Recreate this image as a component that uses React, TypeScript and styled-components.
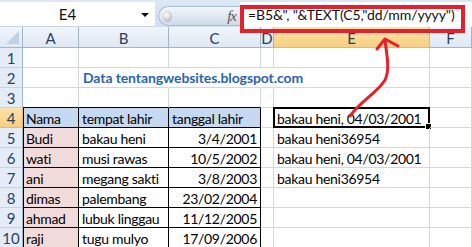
import React from "react";
import styled, { createGlobalStyle, css } from "styled-components";

const Global = createGlobalStyle`
  html, body { margin: 0; padding: 0; background: #fff; overflow: hidden; }
  #root { width: 472px; height: 247px; }
`;

const FONT = `"Lato", "Open Sans", "Liberation Sans", sans-serif`;

const Window = styled.div`
  position: relative;
  width: 472px;
  height: 247px;
  overflow: hidden;
  background: #dbe5f2;
  font-family: ${FONT};
  display: flex;
  flex-direction: column;
`;

const RibbonStrip = styled.div`
  height: 5px;
  display: flex;
  gap: 4px;
  background: #c4d6ec;
  overflow: hidden;
`;

const GroupLabel = styled.div<{ $w: number }>`
  width: ${(p) => p.$w}px;
  flex: none;
  height: 5px;
  position: relative;
  background: linear-gradient(#c7d8ee, #b9cfea);
  border: 1px solid #9fbadd;
  border-top: none;
  border-radius: 0 0 3px 3px;
  box-sizing: border-box;
  overflow: hidden;
  span {
    position: absolute;
    left: 0;
    right: 0;
    bottom: -1px;
    text-align: center;
    font-size: 11px;
    line-height: 11px;
    color: #3b64a5;
  }
`;

const FormulaArea = styled.div`
  height: 29px;
  box-sizing: border-box;
  padding-top: 2px;
  display: flex;
  align-items: flex-start;
  background: linear-gradient(#dce7f5, #d2dff0);
`;

const NameBox = styled.div`
  width: 155px;
  height: 25px;
  flex: none;
  background: #fff;
  display: flex;
  align-items: center;
  position: relative;
  font-size: 15px;
  color: #111;
  box-sizing: border-box;
  border-bottom: 1px solid #c9d6e8;
`;

const NameText = styled.div`
  flex: 1;
  text-align: center;
  padding-right: 20px;
`;

const DropArrow = styled.div`
  position: absolute;
  right: 6px;
  top: 11px;
  width: 0;
  height: 0;
  border-left: 4px solid transparent;
  border-right: 4px solid transparent;
  border-top: 4px solid #111;
`;

const FxPill = styled.div`
  margin-left: 3px;
  margin-top: 4px;
  width: 82px;
  height: 20px;
  flex: none;
  box-sizing: border-box;
  border: 1px solid #a7bdd8;
  border-right: none;
  border-radius: 10px 0 0 10px;
  background: linear-gradient(#f4f7fb, #dfe7f2 55%, #cfdbea);
  display: flex;
  align-items: center;
  justify-content: space-between;
  padding: 0 4px 0 4px;
`;

const Knob = styled.div`
  width: 9px;
  height: 11px;
  border-radius: 50%;
  background: radial-gradient(circle at 40% 35%, #ffffff, #c4c9d0 60%, #a9b0ba);
`;

const Fx = styled.span`
  font-family: "Liberation Serif", serif;
  font-style: italic;
  font-size: 15px;
  color: #555;
  letter-spacing: -1px;
`;

const FormulaInput = styled.div`
  flex: 1;
  height: 25px;
  background: #fff;
  display: flex;
  align-items: center;
  padding-left: 8px;
  font-size: 14px;
  letter-spacing: -0.1px;
  color: #111;
  white-space: nowrap;
`;

const Grid = styled.div`
  display: grid;
  grid-template-columns: 23px 56px 90px 92px 13px 156px 42px;
  grid-auto-rows: 20px;
  grid-template-rows: 21px;
  background: #fff;
  font-size: 14px;
  letter-spacing: -0.3px;
`;

const Head = styled.div<{ $sel?: boolean; $row?: boolean }>`
  box-sizing: border-box;
  border-right: 1px solid #9eb6ce;
  border-bottom: 1px solid #9eb6ce;
  background: linear-gradient(#f1f5fb, #dfe8f4);
  color: #27415f;
  display: flex;
  align-items: center;
  justify-content: center;
  font-size: 15px;
  letter-spacing: 0;
  padding-top: 1px;
  ${(p) =>
    p.$row &&
    css`
      background: #e4ecf7;
      border-bottom-color: #c5d3e6;
    `}
  ${(p) =>
    p.$sel &&
    css`
      background: linear-gradient(#fbe3ad, #f7cf7e);
      border-right-color: #f0b55a;
      border-bottom-color: #f0b55a;
    `}
`;

const Corner = styled(Head)`
  position: relative;
  &::after {
    content: "";
    position: absolute;
    right: 3px;
    bottom: 3px;
    width: 0;
    height: 0;
    border-left: 13px solid transparent;
    border-bottom: 13px solid #c0d1e6;
  }
`;

type CellProps = {
  $fill?: string;
  $right?: boolean;
  $table?: boolean;
  $left?: boolean;
  $topEdge?: boolean;
  $noRight?: boolean;
  $sel?: boolean;
};

const Cell = styled.div<CellProps>`
  box-sizing: border-box;
  position: relative;
  border-right: 1px solid ${(p) => (p.$table ? "#000" : p.$noRight ? "transparent" : "#d0d7e5")};
  border-bottom: 1px solid ${(p) => (p.$table || p.$topEdge ? "#000" : "#d0d7e5")};
  background: ${(p) => p.$fill || "transparent"};
  display: block;
  text-align: ${(p) => (p.$right ? "right" : "left")};
  padding: 2px 3px 0 3px;
  white-space: nowrap;
  color: #000;
  line-height: 17px;
  ${(p) => p.$left && css`box-shadow: inset 1px 0 0 #000;`}
  ${(p) =>
    p.$sel &&
    css`
      &::before {
        content: "";
        position: absolute;
        left: -1px;
        top: -1px;
        right: -1px;
        bottom: -1px;
        border: 2px solid #000;
      }
      &::after {
        content: "";
        position: absolute;
        right: -3px;
        bottom: -3px;
        width: 5px;
        height: 5px;
        background: #000;
        border: 1px solid #fff;
      }
    `}
`;

/* Title text spills over the neighbouring empty cells, as in Excel */
const SpillText = styled.span`
  position: absolute;
  left: 4px;
  bottom: 1px;
  z-index: 2;
  line-height: 17px;
  white-space: nowrap;
  color: #2a64b0;
  font-weight: bold;
  font-size: 14px;
  letter-spacing: -0.1px;
`;

const Annotation = styled.svg`
  position: absolute;
  left: 0;
  top: 0;
  pointer-events: none;
  overflow: visible;
`;

type Row = {
  n: number;
  a?: string;
  b?: string;
  c?: string;
  e?: string;
};

const rows: Row[] = [
  { n: 1 },
  { n: 2 },
  { n: 3 },
  { n: 4, a: "Nama", b: "tempat lahir", c: "tanggal lahir", e: "bakau heni, 04/03/2001" },
  { n: 5, a: "Budi", b: "bakau heni", c: "3/4/2001", e: "bakau heni36954" },
  { n: 6, a: "wati", b: "musi rawas", c: "10/5/2002", e: "bakau heni, 04/03/2001" },
  { n: 7, a: "ani", b: "megang sakti", c: "3/8/2003", e: "bakau heni36954" },
  { n: 8, a: "dimas", b: "palembang", c: "23/02/2004" },
  { n: 9, a: "ahmad", b: "lubuk linggau", c: "11/12/2005" },
  { n: 10, a: "raji", b: "tugu mulyo", c: "17/09/2006" },
];

const cols = ["A", "B", "C", "D", "E", "F"];

export default function App() {
  return (
    <>
      <Global />
      <Window>
        <RibbonStrip>
          <GroupLabel $w={75}>
            <span>Clipboard</span>
          </GroupLabel>
          <GroupLabel $w={195}>
            <span>Font</span>
          </GroupLabel>
          <GroupLabel $w={190}>
            <span>Alignment</span>
          </GroupLabel>
        </RibbonStrip>
        <FormulaArea>
          <NameBox>
            <NameText>E4</NameText>
            <DropArrow />
          </NameBox>
          <FxPill>
            <Knob />
            <Fx>fx</Fx>
          </FxPill>
          <FormulaInput>=B5&amp;", "&amp;TEXT(C5,"dd/mm/yyyy")</FormulaInput>
        </FormulaArea>
        <Grid>
          <Corner />
          {cols.map((c) => (
            <Head key={c} $sel={c === "E"}>
              {c}
            </Head>
          ))}
          {rows.map((r) => {
            const inTable = r.n >= 4;
            const head = r.n === 4;
            return (
              <React.Fragment key={r.n}>
                <Head $row $sel={r.n === 4}>
                  {r.n}
                </Head>
                <Cell
                  $table={inTable}
                  $left={inTable}
                  $topEdge={r.n === 3}
                  $fill={head ? "#c5d9f1" : inTable ? "#f2dcdb" : undefined}
                >
                  {r.a}
                </Cell>
                <Cell
                  $table={inTable}
                  $topEdge={r.n === 3}
                  $noRight={r.n === 2}
                  $fill={head ? "#c5d9f1" : undefined}
                >
                  {r.n === 2 ? <SpillText>Data tentangwebsites.blogspot.com</SpillText> : r.b}
                </Cell>
                <Cell
                  $table={inTable}
                  $topEdge={r.n === 3}
                  $noRight={r.n === 2}
                  $right={!head}
                  $fill={head ? "#c5d9f1" : undefined}
                >
                  {r.c}
                </Cell>
                <Cell $noRight={r.n === 2} />
                <Cell $sel={r.n === 4}>{r.e}</Cell>
                <Cell />
              </React.Fragment>
            );
          })}
        </Grid>
        <Annotation width="472" height="247">
          <rect x="242" y="7" width="221" height="24" fill="none" stroke="#e3212b" strokeWidth="4" />
          <path
            d="M350 116 C 362 100, 378 92, 385 80 C 390 70, 387 55, 385 41"
            fill="none"
            stroke="#e3212b"
            strokeWidth="3"
            strokeLinecap="round"
          />
          <path
            d="M377 49 L385 39 L398 46"
            fill="none"
            stroke="#e3212b"
            strokeWidth="3"
            strokeLinecap="round"
            strokeLinejoin="round"
          />
        </Annotation>
      </Window>
    </>
  );
}
